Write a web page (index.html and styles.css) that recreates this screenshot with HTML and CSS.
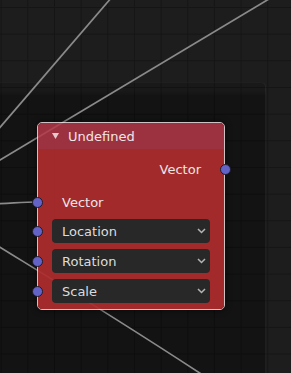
FILE: index.html
```html
<!DOCTYPE html>
<html lang="en">
  <head>
    <meta charset="UTF-8" />
    <meta name="viewport" content="width=device-width, initial-scale=1.0" />
    <title>Node editor</title>
    <link rel="stylesheet" href="styles.css">
  </head>
  <body>
    <div class="canvas">
      <!-- frame node behind everything -->
      <div class="frame"></div>

      <!-- links between sockets -->
      <svg class="wires" width="291" height="373" viewBox="0 0 291 373">
        <path d="M118 -10 L-10 139" />
        <path d="M284 -10 L-10 166" />
        <path d="M-10 204 C10 203.5, 22 202, 37 202" />
        <path d="M-10 241 C30 266, 110 314, 215 383" />
      </svg>

      <!-- the node itself -->
      <div class="node">
        <div class="node-header">
          <svg class="collapse" width="7" height="6" viewBox="0 0 7 6">
            <polygon points="0,0 7,0 3.5,6" />
          </svg>
          <span>Undefined</span>
        </div>

        <div class="node-body">
          <div class="row row-out">
            <span class="label">Vector</span>
            <i class="socket socket-out"></i>
          </div>

          <div class="row row-in">
            <i class="socket socket-in"></i>
            <span class="label">Vector</span>
          </div>

          <div class="row row-in row-select">
            <i class="socket socket-in"></i>
            <div class="select">
              <span>Location</span>
              <svg class="chevron" width="9" height="6" viewBox="0 0 9 6"><polyline points="1,1 4.5,4.5 8,1" /></svg>
            </div>
          </div>

          <div class="row row-in row-select">
            <i class="socket socket-in"></i>
            <div class="select">
              <span>Rotation</span>
              <svg class="chevron" width="9" height="6" viewBox="0 0 9 6"><polyline points="1,1 4.5,4.5 8,1" /></svg>
            </div>
          </div>

          <div class="row row-in row-select">
            <i class="socket socket-in"></i>
            <div class="select">
              <span>Scale</span>
              <svg class="chevron" width="9" height="6" viewBox="0 0 9 6"><polyline points="1,1 4.5,4.5 8,1" /></svg>
            </div>
          </div>
        </div>
      </div>
    </div>
  </body>
</html>
```

FILE: styles.css
```css
:root {
  --grid-bg: #1d1d1d;
  --grid-line: #151515;
  --wire: #8a8a8a;
  --socket: #6363c7;
  --header: rgba(181, 55, 72, 0.85);
  --body: rgba(174, 44, 45, 0.93);
  --select-bg: #282828;
  --text: #ebe6e6;
}

* {
  margin: 0;
  padding: 0;
  box-sizing: border-box;
}

body {
  background-color: var(--grid-bg);
  font-family: "DejaVu Sans", "Noto Sans", sans-serif;
  font-size: 13px;
  color: var(--text);
  overflow: hidden;
}

/* 画布 + 网格 */
.canvas {
  position: relative;
  width: 291px;
  height: 373px;
  overflow: hidden;
  background-color: var(--grid-bg);
  background-image:
    linear-gradient(to right, var(--grid-line) 1px, transparent 1px),
    linear-gradient(to bottom, var(--grid-line) 1px, transparent 1px);
  background-size: 26.667px 26.667px;
  background-position: 0.667px 7px;
}

/* 框架节点 */
.frame {
  position: absolute;
  left: -20px;
  top: 82px;
  width: 286px;
  height: 320px;
  border: 1px solid rgba(255, 255, 255, 0.05);
  border-radius: 5px;
  background: linear-gradient(
    to bottom,
    rgba(0, 0, 0, 0.12) 0,
    rgba(0, 0, 0, 0.12) 8px,
    rgba(0, 0, 0, 0.34) 13px
  );
}

/* 连线 */
.wires {
  position: absolute;
  left: 0;
  top: 0;
}

.wires path {
  fill: none;
  stroke: var(--wire);
  stroke-width: 1.7;
}

/* 节点 */
.node {
  position: absolute;
  left: 37px;
  top: 122px;
  width: 188px;
  height: 188px;
  border: 1px solid rgba(240, 225, 228, 0.85);
  border-radius: 5px;
  box-shadow: 0 0 6px rgba(0, 0, 0, 0.6);
  display: flex;
  flex-direction: column;
}

.node-header {
  height: 26px;
  flex-shrink: 0;
  display: flex;
  align-items: center;
  gap: 9px;
  padding-left: 14px;
  background: var(--header);
  border-radius: 4px 4px 0 0;
  color: #f2e6e8;
}

.collapse polygon {
  fill: #e6c9cd;
}

.node-body {
  flex: 1;
  background: var(--body);
  border-radius: 0 0 4px 4px;
  padding: 9px 0 0;
  display: flex;
  flex-direction: column;
}

.row {
  position: relative;
  height: 22px;
  display: flex;
  align-items: center;
  padding: 0 14px;
}

.row-out {
  justify-content: flex-end;
  padding-right: 23px;
  margin-bottom: 11px;
}

.row-in .label {
  padding-left: 10px;
}

.row-select {
  height: 24px;
  margin-top: 5px;
}

.row-in + .row-select {
  margin-top: 6px;
}

/* 插槽 */
.socket {
  position: absolute;
  top: 50%;
  width: 11px;
  height: 11px;
  margin-top: -5.5px;
  border-radius: 50%;
  background: var(--socket);
  border: 1px solid #1e1b2a;
}

.socket-in {
  left: -6.5px;
}

.socket-out {
  right: -6.5px;
}

/* 下拉框 */
.select {
  flex: 1;
  height: 24px;
  display: flex;
  align-items: center;
  justify-content: space-between;
  padding: 0 4px 0 10px;
  background: var(--select-bg);
  border-radius: 4px;
  color: #dcdcdc;
}

.chevron polyline {
  fill: none;
  stroke: #b4b4b4;
  stroke-width: 1.5;
}
```
